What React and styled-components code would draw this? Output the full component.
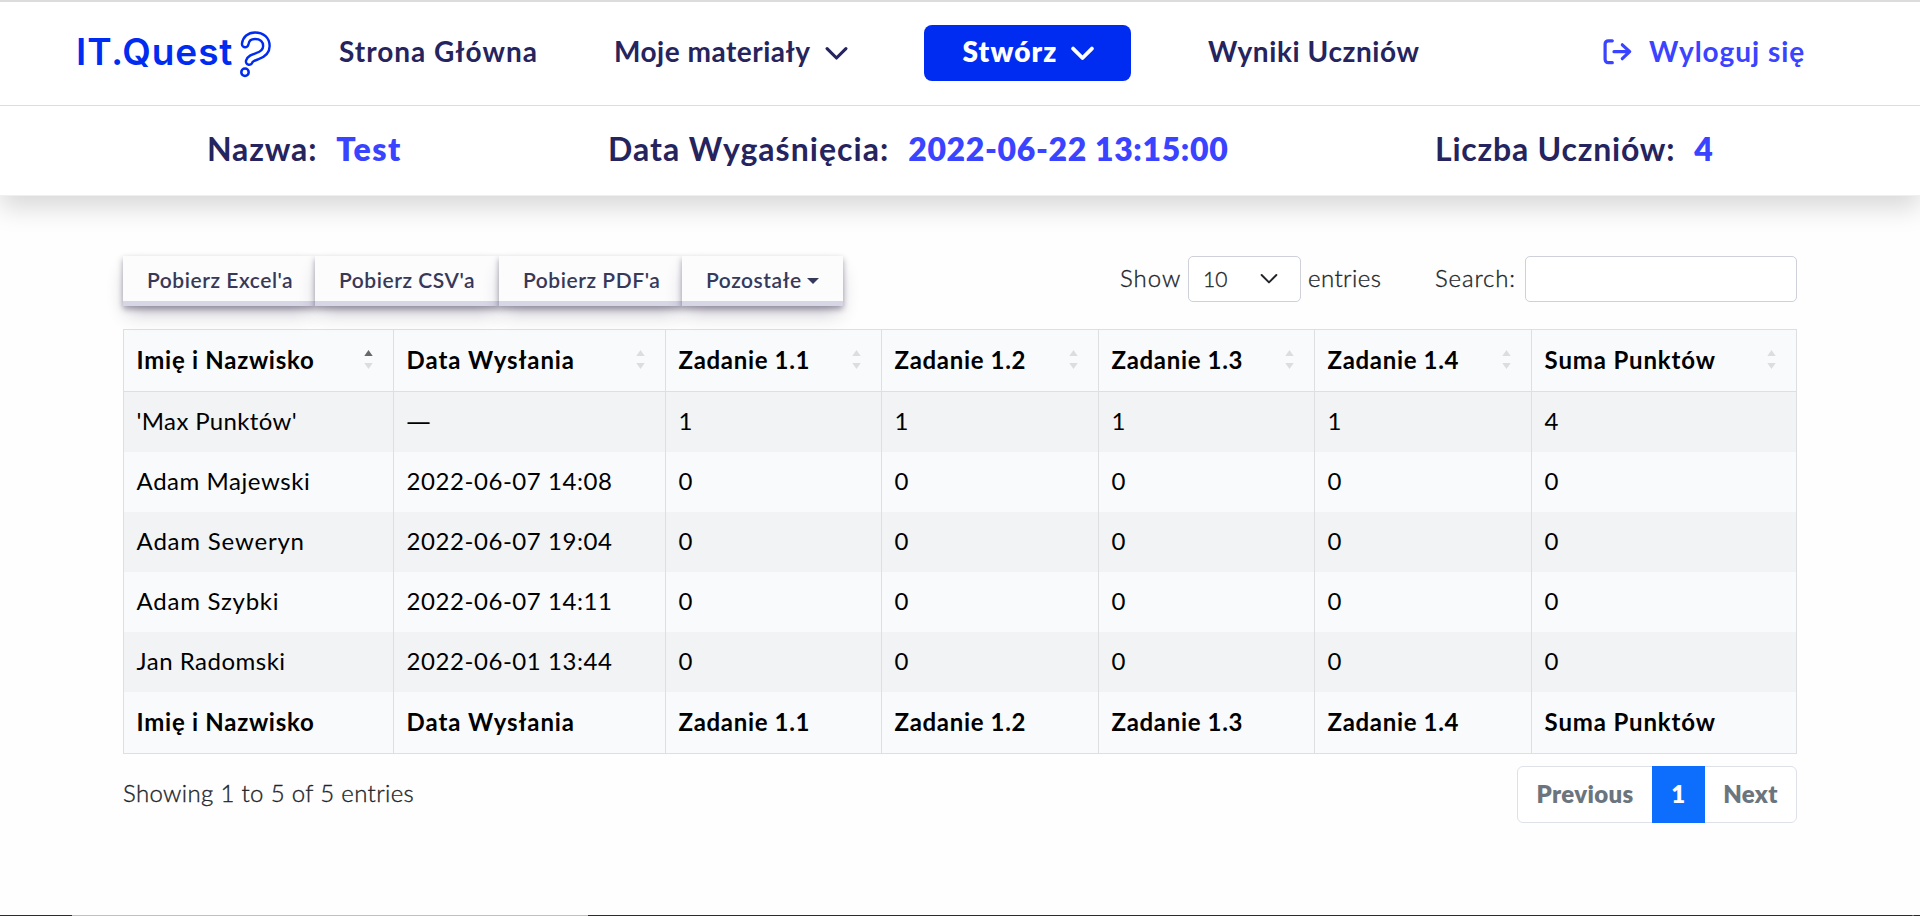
import React from 'react';
import styled, { createGlobalStyle } from 'styled-components';

const GlobalStyle = createGlobalStyle`
  *, *::before, *::after { box-sizing: border-box; }
  body {
    margin: 0;
    background: #fefefe;
    color: #212529;
    font-family: Lato, "Noto Sans", sans-serif;
    font-size: 24px;
  }
`;

const Page = styled.div`
  display: flex;
  flex-direction: column;
  height: 916px;
  overflow: hidden;
`;

const Header = styled.header`
  background: #fff;
  border-top: 2px solid #dcdcdc;
  border-bottom: 1px solid #efefef;
  box-shadow: 0 12px 24px rgba(0, 0, 0, 0.15);
  position: relative;
`;

const Nav = styled.nav`
  display: grid;
  grid-template-columns: 76px 263px 275px 310px 284px 394px 1fr;
  height: 104px;
  padding-top: 23px;
  border-bottom: 1px solid #dedede;
`;

const Logo = styled.a`
  grid-column: 2;
  display: flex;
  height: 56px;
  color: #002bf0;
`;

const LogoText = styled.span`
  font-family: Inter, sans-serif;
  font-size: 37px;
  font-weight: 620;
  line-height: 53px;
  letter-spacing: 0.9px;
  width: 164px;
`;

const LogoMark = styled.svg`
  flex: none;
  width: 34px;
  height: 50px;
  margin-top: 5px;
`;

const NavLink = styled.a`
  display: flex;
  align-items: center;
  height: 52px;
  font-size: 28px;
  font-weight: 700;
  letter-spacing: ${(p) => p.$spacing}px;
  color: ${(p) => (p.$accent ? '#3a43ff' : '#25245e')};
  white-space: nowrap;
`;

const CreateButton = styled.button`
  display: flex;
  justify-content: center;
  align-items: center;
  width: 207px;
  height: 56px;
  padding: 0 0 5px 2px;
  border: 0;
  border-radius: 8px;
  background: #002bf0;
  color: #fff;
  font: 800 28px Lato, sans-serif;
  letter-spacing: 1.1px;
`;

const ChevronSvg = styled.svg`
  flex: none;
  width: ${(p) => p.$width}px;
  margin-left: ${(p) => p.$gap}px;
  margin-top: ${(p) => p.$drop || 0}px;
`;

const LogoutIcon = styled.svg`
  flex: none;
  width: 34px;
  height: 32px;
  margin: 2px 13px 0 0;
`;

const InfoBar = styled.section`
  display: grid;
  grid-template-columns: 207px 401px 827px 1fr;
  height: 89px;
  line-height: 86px;
  font-size: 32px;
  white-space: nowrap;
`;

const InfoItem = styled.div`
  grid-column: ${(p) => p.$column};
  font-weight: 700;
  letter-spacing: ${(p) => p.$spacing}px;
  color: #25245e;
`;

const InfoValue = styled.span`
  margin-left: 19px;
  font-weight: 800;
  letter-spacing: ${(p) => p.$spacing}px;
  color: #3a43ff;
`;

const Main = styled.main`
  width: 1674px;
  margin: 60px 0 0 123px;
`;

const Toolbar = styled.div`
  display: flex;
  height: 50px;
`;

const ButtonGroup = styled.div`
  display: flex;
  flex: 1;
`;

const ExportButton = styled.button`
  width: ${(p) => p.$width}px;
  height: 50px;
  padding: 0 0 4px 24px;
  border: 0;
  background: #fcfcfd;
  box-shadow:
    rgba(45, 35, 66, 0.4) 0 3px 6px,
    rgba(45, 35, 66, 0.3) 0 10.5px 19.5px -4.5px,
    #d6d6e7 0 -5px 0 inset;
  color: #36395a;
  font: 600 21px Lato, sans-serif;
  letter-spacing: 0.54px;
  text-align: left;
  white-space: nowrap;
`;

const Caret = styled.span`
  display: inline-block;
  margin-left: 5px;
  vertical-align: 4px;
  border: 6.3px solid transparent;
  border-top-color: currentColor;
  border-bottom: 0;
`;

const Filters = styled.div`
  display: flex;
  align-items: center;
  height: 46px;
  font-weight: 300;
  -webkit-text-stroke: 0.35px currentColor;
`;

const Label = styled.span`
  width: ${(p) => p.$width}px;
  padding-bottom: 3px;
  letter-spacing: ${(p) => p.$spacing}px;
`;

const Select = styled.div`
  display: flex;
  align-items: center;
  width: 113px;
  height: 46px;
  margin-right: 7px;
  padding: 0 22px 2px 14px;
  border: 1px solid #ced0da;
  border-radius: 5px;
  background: #fff;
  font-size: 21px;
  justify-content: space-between;
`;

const SearchInput = styled.input`
  width: 272px;
  height: 46px;
  border: 1px solid #ced0da;
  border-radius: 5px;
  background: #fff;
`;

const Table = styled.table`
  width: 1674px;
  margin-top: 23px;
  table-layout: fixed;
  border-collapse: separate;
  border-spacing: 0;
  border: 0 solid #dddfe1;
  border-top-width: 1px;
  border-left-width: 1px;
  background: #f8fafc;
  color: #000;
`;

const Cell = styled.td`
  height: 60px;
  padding: 0 20px 3px 12.6px;
  border-right: 1px solid #dddfe1;
  background: ${(p) => (p.$striped ? '#f1f3f5' : 'transparent')};
  letter-spacing: ${(p) => p.$spacing || 0}px;
`;

const Dash = styled.span`
  font-family: "Open Sans", sans-serif;
  line-height: 1;
`;

const HeadCell = styled.th`
  height: 62px;
  padding: 0 20px 2px 12.6px;
  border-right: 1px solid #dddfe1;
  border-bottom: 1px solid #dddfe1;
  font-weight: 700;
  text-align: left;
  letter-spacing: ${(p) => p.$spacing}px;
`;

const HeadContent = styled.div`
  display: flex;
  align-items: center;
  justify-content: space-between;
`;

const SortIcon = styled.svg`
  width: 9px;
  height: 20px;
`;

const Bottom = styled.div`
  display: flex;
  justify-content: space-between;
  height: 57px;
  margin-top: 12px;
  line-height: 53px;
`;

const Summary = styled.span`
  font-weight: 300;
  letter-spacing: 0.34px;
  -webkit-text-stroke: 0.35px currentColor;
`;

const Pagination = styled.div`
  display: flex;
  width: 280px;
  border: 1px solid #dee2e8;
  border-radius: 6px;
  background: #fff;
`;

const PageItem = styled.a`
  width: ${(p) => p.$width}px;
  margin: -1px 0;
  padding-top: 1px;
  text-align: center;
  font-weight: 800;
  letter-spacing: 0.35px;
  color: ${(p) => (p.$active ? '#fff' : '#6c757d')};
  background: ${(p) => (p.$active ? '#0d6efd' : 'transparent')};
`;

const BottomEdge = styled.div`
  height: 1px;
  margin-top: auto;
  background: linear-gradient(90deg, #2f2a2b 72px, #c0c0c0 72px 588px, #2f2a2b 588px 1912px, #6a6667 1912px 1914px, #2f2a2b 1914px);
`;

const Chevron = ({ width, gap, drop, stroke = 3 }) => (
  <ChevronSvg $width={width} $gap={gap} $drop={drop} viewBox="0 0 22 14" fill="none">
    <path d="M2 2.5 11 11.5 20 2.5" stroke="currentColor" strokeWidth={stroke} strokeLinecap="round" strokeLinejoin="round" />
  </ChevronSvg>
);

const Sort = ({ ascending }) => (
  <SortIcon viewBox="0 0 9 20">
    <path d="M4.5 0 8.7 6H.3Z" fill={ascending ? '#666869' : '#dcddde'} />
    <path d="M4.5 19 8.7 13H.3Z" fill="#dcddde" />
  </SortIcon>
);

const columns = [
  ['Imię i Nazwisko', 270, 0.72],
  ['Data Wysłania', 272, 0.92],
  ['Zadanie 1.1', 216, 0.66],
  ['Zadanie 1.2', 217, 0.66],
  ['Zadanie 1.3', 216, 0.66],
  ['Zadanie 1.4', 217, 0.66],
  ['Suma Punktów', 265, 0.85],
];

const rows = [
  ["'Max Punktów'", '—', '1', '1', '1', '1', '4'],
  ['Adam Majewski', '2022-06-07 14:08', '0', '0', '0', '0', '0'],
  ['Adam Seweryn', '2022-06-07 19:04', '0', '0', '0', '0', '0'],
  ['Adam Szybki', '2022-06-07 14:11', '0', '0', '0', '0', '0'],
  ['Jan Radomski', '2022-06-01 13:44', '0', '0', '0', '0', '0'],
];

const nameSpacing = [0.35, 0.55, 0.8, 0.75, 0.5];

const questionPath = 'M5.2 14C5.8 9 9.6 5.7 15 5.7C22 5.7 26.4 10 26.4 16C26.4 22 22 24.6 17 26.3C12.5 27.8 10.2 28.5 9.2 31.5';

const cellSpacing = (value, row, column) => {
  if (value.length === 1) return 0;
  return column === 0 ? nameSpacing[row] : 0.55;
};

export default function App() {
  return (
    <Page>
      <GlobalStyle />
      <Header>
        <Nav>
          <Logo>
            <LogoText>IT.Quest</LogoText>
            <LogoMark viewBox="0 0 34 50" fill="none" strokeLinecap="round">
              <path d={questionPath} stroke="#002bf0" strokeWidth="8.9" />
              <path d={questionPath} stroke="#fff" strokeWidth="4.1" />
              <circle cx="5" cy="42.2" r="3.7" stroke="#002bf0" strokeWidth="2.5" />
            </LogoMark>
          </Logo>
          <NavLink $spacing={1}>Strona Główna</NavLink>
          <NavLink $spacing={0.5}>
            Moje materiały
            <Chevron width={23} gap={15} drop={4} />
          </NavLink>
          <CreateButton>
            Stwórz
            <Chevron width={23} gap={14} drop={5} stroke={3.6} />
          </CreateButton>
          <NavLink $spacing={0.58}>Wyniki Uczniów</NavLink>
          <NavLink $spacing={0.98} $accent>
            <LogoutIcon viewBox="12 6 34 32" fill="none" stroke="currentColor" strokeWidth="3.2" strokeLinecap="round" strokeLinejoin="round">
              <path d="M22.3 10.8h-4a3.2 3.2 0 0 0-3.2 3.2v15.5a3.2 3.2 0 0 0 3.2 3.2h4" />
              <path d="M24 21.7h15.5M32.3 14.8l7.4 6.9-7.4 7" />
            </LogoutIcon>
            Wyloguj się
          </NavLink>
        </Nav>
        <InfoBar>
          <InfoItem $column={2} $spacing={0.85}>
            Nazwa:<InfoValue $spacing={1.5}>Test</InfoValue>
          </InfoItem>
          <InfoItem $column={3} $spacing={1.03}>
            Data Wygaśnięcia:<InfoValue $spacing={0.63}>2022-06-22 13:15:00</InfoValue>
          </InfoItem>
          <InfoItem $column={4} $spacing={0.78}>
            Liczba Uczniów:<InfoValue $spacing={0}>4</InfoValue>
          </InfoItem>
        </InfoBar>
      </Header>
      <Main>
        <Toolbar>
          <ButtonGroup>
            <ExportButton $width={192}>Pobierz Excel'a</ExportButton>
            <ExportButton $width={184}>Pobierz CSV'a</ExportButton>
            <ExportButton $width={183}>Pobierz PDF'a</ExportButton>
            <ExportButton $width={161}>
              Pozostałe
              <Caret />
            </ExportButton>
          </ButtonGroup>
          <Filters>
            <Label $width={68} $spacing={1}>Show</Label>
            <Select>
              10
              <Chevron width={18} gap={0} stroke={2.4} drop={2} />
            </Select>
            <Label $width={127} $spacing={0.43}>entries</Label>
            <Label $width={90} $spacing={0.85}>Search:</Label>
            <SearchInput />
          </Filters>
        </Toolbar>
        <Table>
          <colgroup>
            {columns.map(([name, width]) => (
              <col key={name} width={width} />
            ))}
          </colgroup>
          <thead>
            <tr>
              {columns.map(([name, , spacing], i) => (
                <HeadCell key={name} $spacing={spacing}>
                  <HeadContent>
                    {name}
                    <Sort ascending={i === 0} />
                  </HeadContent>
                </HeadCell>
              ))}
            </tr>
          </thead>
          <tbody>
            {rows.map((row, r) => (
              <tr key={row[0]}>
                {row.map((value, i) => (
                  <Cell key={i} $striped={r % 2 === 0} $spacing={cellSpacing(value, r, i)}>
                    {value === '—' ? <Dash>{value}</Dash> : value}
                  </Cell>
                ))}
              </tr>
            ))}
          </tbody>
          <tfoot>
            <tr>
              {columns.map(([name, , spacing]) => (
                <HeadCell key={name} $spacing={spacing}>
                  {name}
                </HeadCell>
              ))}
            </tr>
          </tfoot>
        </Table>
        <Bottom>
          <Summary>Showing 1 to 5 of 5 entries</Summary>
          <Pagination>
            <PageItem $width={134}>Previous</PageItem>
            <PageItem $width={53} $active>1</PageItem>
            <PageItem $width={91}>Next</PageItem>
          </Pagination>
        </Bottom>
      </Main>
      <BottomEdge />
    </Page>
  );
}
